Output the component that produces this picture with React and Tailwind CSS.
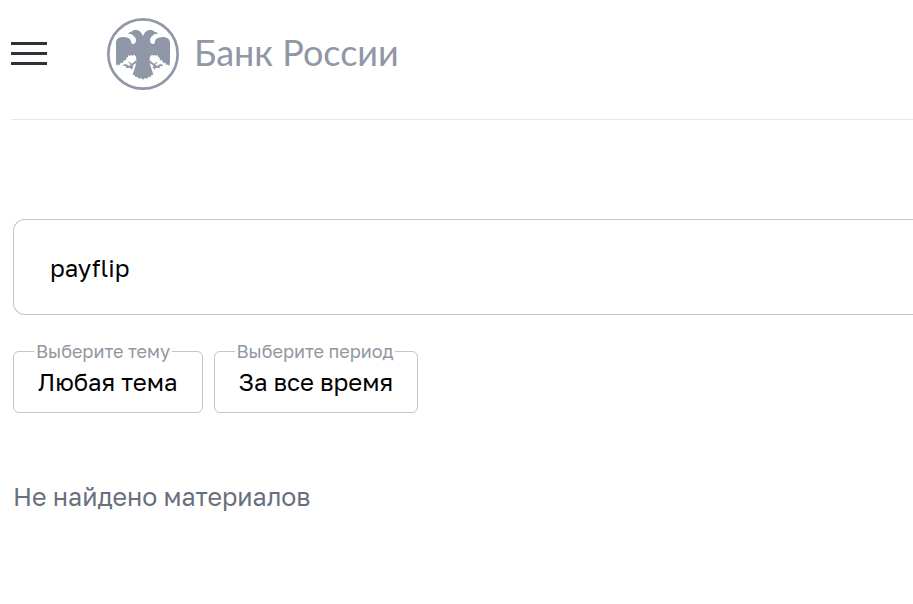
import React, { useState } from 'react';

const topics = ['Любая тема', 'Новости', 'Документы', 'Статистика'];
const periods = ['За все время', 'За год', 'За месяц', 'За неделю'];

function EagleHalf()
{
    return (
        <g>
            <path d="M130 82 C127 71 121 61 109 60 C102 60 98 61 95 65 C90 65 86 67 84 71 C91 71 95 72 98 75 C103 79 108 84 108 90 C108 98 103 103 98 102 C93 101 94 97 92 91 C89 84 78 81 68 81 C55 82 48 88 48 98 L48 156 C48 161 49 165 51 169 L54 163 L59 166 L62 158 L68 159 L72 151 L78 151 L80 142 L84 142 L84 135 L89 138 L93 134 L97 138 L101 134 L107 138 C110 147 110 158 106 169 L98 194 L104 196 L106 201 L113 200 L116 206 L123 204 L130 209 Z" />
            <path d="M110 158 L101 164 L97 168 L101 172 L97 174 L96 181 L92 175 L86 173 L77 175 L80 170 L74 167 L68 168 L72 163 L79 163 L86 167 L92 166 L89 160 L84 156 L89 156 L95 161 L102 157 L108 150 Z" />
        </g>
    );
}

function Logo()
{
    return (
        <a href="/" className="flex items-start gap-[15px] text-[#9097a6]">
            <svg className="h-[72px] w-[72px] shrink-0" viewBox="21 24 216 216" fill="currentColor" aria-hidden="true">
                <circle cx="129" cy="132" r="104" fill="none" stroke="currentColor" strokeWidth="8" />
                <EagleHalf />
                <g transform="translate(258 0) scale(-1 1)">
                    <EagleHalf />
                </g>
            </svg>
            <span className="pt-[14px] font-['Lato',sans-serif] text-[36px] leading-10 whitespace-nowrap">Банк России</span>
        </a>
    );
}

function FilterSelect({ id, label, options })
{
    return (
        <fieldset className="rounded-md border border-[#c4c5cb] px-5">
            <legend className="px-[2px] text-lg leading-[18px] text-[#9097a0]">
                <label htmlFor={id}>{label}</label>
            </legend>
            <select id={id} className="mb-[9px] block h-[43px] cursor-pointer appearance-none bg-transparent pr-[4px] pl-[4px] text-2xl text-black outline-none [field-sizing:content]">
                {options.map((option) => (
                    <option key={option}>{option}</option>
                ))}
            </select>
        </fieldset>
    );
}

export default function App()
{
    const [query, setQuery] = useState('payflip');

    return (
        <div className="min-h-screen overflow-hidden bg-white font-['Golos_Text','Inter',sans-serif]">
            <header className="ml-[11px] flex h-[120px] items-start gap-[60px] border-b border-[#e8e8ea] pt-[18px]">
                <button type="button" aria-label="Меню" className="mt-6 flex w-9 cursor-pointer flex-col gap-[7px]">
                    <span className="h-[3px] w-full bg-[#333138]" />
                    <span className="h-[3px] w-full bg-[#333138]" />
                    <span className="h-[3px] w-full bg-[#333138]" />
                </button>
                <Logo />
            </header>

            <main className="pt-[99px] pl-[13px]">
                <form onSubmit={(e) => e.preventDefault()}>
                    <input
                        type="text"
                        aria-label="Поиск"
                        value={query}
                        onChange={(e) => setQuery(e.target.value)}
                        className="block h-24 w-full rounded-l-xl border border-r-0 border-[#c4c5c8] px-9 text-2xl text-black outline-none"
                    />
                    <div className="mt-[27px] flex gap-[11px]">
                        <FilterSelect id="topic" label="Выберите тему" options={topics} />
                        <FilterSelect id="period" label="Выберите период" options={periods} />
                    </div>
                </form>
                <p className="mt-[68px] text-[25px] leading-8 text-[#69707d]">Не найдено материалов</p>
            </main>
        </div>
    );
}
